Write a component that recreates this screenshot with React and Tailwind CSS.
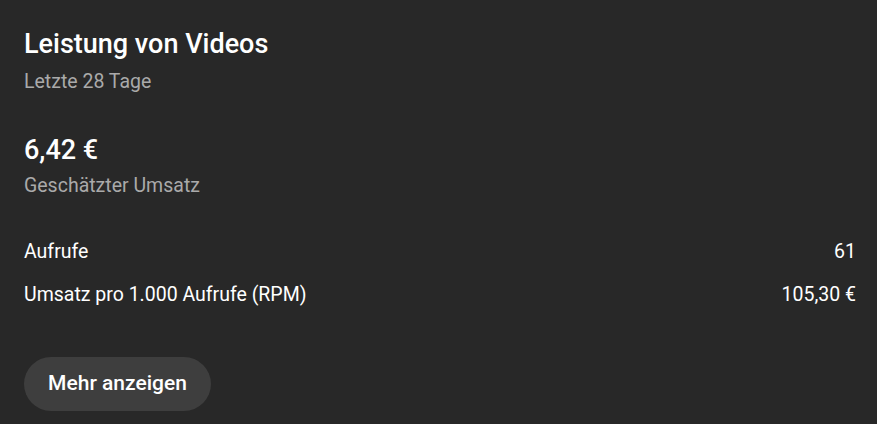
export default function App() {
  return (
    <div className="w-[877px] h-[424px] bg-[#282828] text-white pl-6 pr-[21px] pt-[26px] font-['Roboto',sans-serif]">
      <h2 className="text-[27px] leading-9 font-medium">Leistung von Videos</h2>
      <p className="text-[19.5px] leading-7 text-[#aaaaaa] mt-[6px]">Letzte 28 Tage</p>

      <div className="mt-[36px]">
        <p className="text-[27px] leading-9 font-medium">6,42 €</p>
        <p className="text-[19.5px] leading-7 text-[#aaaaaa] mt-[4px]">Geschätzter Umsatz</p>
      </div>

      <div className="mt-[38px] flex flex-col gap-[15px] text-[19.5px] leading-7">
        <div className="flex justify-between">
          <span>Aufrufe</span>
          <span>61</span>
        </div>
        <div className="flex justify-between">
          <span>Umsatz pro 1.000 Aufrufe (RPM)</span>
          <span>105,30 €</span>
        </div>
      </div>

      <button className="mt-[48px] h-[54px] w-[187px] rounded-full bg-[#3e3e3e] text-[21px] font-medium">
        Mehr anzeigen
      </button>
    </div>
  );
}
